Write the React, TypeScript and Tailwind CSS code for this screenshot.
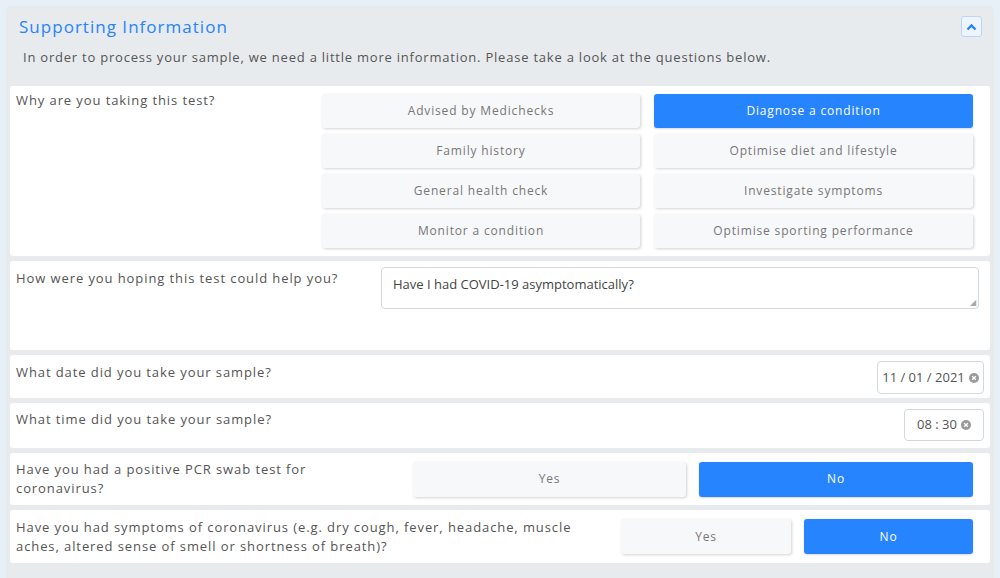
const F = { fontFamily: '"Open Sans", "Liberation Sans", sans-serif' };

const Btn = ({ label, active, className = "" }: { label: string; active?: boolean; className?: string }) => (
  <button
    className={
      "h-[34px] rounded-[3px] text-[12px] tracking-[0.07em] " +
      (active
        ? "bg-[#2684ff] text-white shadow-[0_1px_2px_rgba(0,0,0,0.15)] "
        : "bg-[#f7f8fa] text-[#777] shadow-[1px_1px_3px_rgba(0,0,0,0.18)] ") +
      className
    }
  >
    {label}
  </button>
);

const Clear = () => (
  <svg width="10" height="10" viewBox="0 0 10 10" className="ml-1">
    <circle cx="5" cy="5" r="5" fill="#9a9a9a" />
    <path d="M3.2 3.2L6.8 6.8M6.8 3.2L3.2 6.8" stroke="#fff" strokeWidth="1.3" />
  </svg>
);

const Label = ({ children, className = "" }: { children: React.ReactNode; className?: string }) => (
  <div className={"text-[13px] leading-[19px] tracking-[0.07em] text-[#555] " + className}>{children}</div>
);

export default function App() {
  const reasons = [
    ["Advised by Medichecks", "Diagnose a condition"],
    ["Family history", "Optimise diet and lifestyle"],
    ["General health check", "Investigate symptoms"],
    ["Monitor a condition", "Optimise sporting performance"],
  ];
  return (
    <div className="w-[1000px] h-[578px] bg-[#e6f0f6] pt-[6px] pl-[6px] overflow-hidden" style={F}>
      <div className="w-[988px] h-[580px] bg-[#e8ebee] rounded-[4px] px-[4px]">
        <div className="flex items-center justify-between pl-[9px] pr-[8px] pt-[8px]">
          <div className="text-[17px] tracking-[0.06em] text-[#2684ff]">Supporting Information</div>
          <div className="w-[21px] h-[21px] border border-[#b9d6fb] rounded-[3px] flex items-center justify-center bg-[#eef4fb]">
            <svg width="11" height="8" viewBox="0 0 11 8">
              <path d="M1.5 6.5L5.5 2.5L9.5 6.5" stroke="#2684ff" strokeWidth="2.4" fill="none" />
            </svg>
          </div>
        </div>
        <div className="pl-[13px] mt-[8px] text-[13px] tracking-[0.06em] text-[#555]">
          In order to process your sample, we need a little more information. Please take a look at the questions below.
        </div>
        <div className="mt-[19px] flex flex-col gap-[5px]">
          <div className="bg-white rounded-[3px] h-[170px] flex items-start pl-[6px] pt-[5px]">
            <Label className="w-[306px]">Why are you taking this test?</Label>
            <div className="grid grid-cols-[318px_319px] content-start gap-x-[14px] gap-y-[6px] pt-[3px]">
              {reasons.flat().map((r) => (
                <Btn key={r} label={r} active={r === "Diagnose a condition"} />
              ))}
            </div>
          </div>
          <div className="bg-white rounded-[3px] h-[89px] flex items-start pl-[6px] pt-[6px]">
            <Label className="w-[365px] pt-[2px]">How were you hoping this test could help you?</Label>
            <div className="relative w-[598px] h-[42px] border border-[#d3d8de] rounded-[4px] px-[11px] pt-[7px] text-[13px] text-[#444]">
              Have I had COVID-19 asymptomatically?
              <span className="absolute right-[2px] bottom-[0px] text-[8px] text-[#aaa]">◢</span>
            </div>
          </div>
          <div className="bg-white rounded-[3px] h-[43px] flex items-start justify-between pl-[6px] pr-[6px] pt-[6px]">
            <Label className="pt-[2px]">What date did you take your sample?</Label>
            <div className="w-[107px] h-[33px] border border-[#d3d8de] rounded-[4px] flex items-center justify-center text-[13px] text-[#555]">
              11 / 01 / 2021<Clear />
            </div>
          </div>
          <div className="bg-white rounded-[3px] h-[45px] flex items-start justify-between pl-[6px] pr-[6px] pt-[6px]">
            <Label className="pt-[1px]">What time did you take your sample?</Label>
            <div className="w-[80px] h-[32px] border border-[#d3d8de] rounded-[4px] flex items-center justify-center text-[13px] text-[#555]">
              08 : 30<Clear />
            </div>
          </div>
          <div className="bg-white rounded-[3px] h-[52px] flex items-center pl-[6px] pr-[17px]">
            <Label className="w-[397px] pr-[60px]">Have you had a positive PCR swab test for coronavirus?</Label>
            <div className="flex gap-[13px]">
              <Btn label="Yes" className="w-[273px] h-[35px]" />
              <Btn label="No" active className="w-[274px] h-[35px]" />
            </div>
          </div>
          <div className="bg-white rounded-[3px] h-[53px] flex items-center pl-[6px] pr-[17px]">
            <Label className="w-[605px] pr-[25px]">Have you had symptoms of coronavirus (e.g. dry cough, fever, headache, muscle aches, altered sense of smell or shortness of breath)?</Label>
            <div className="flex gap-[13px]">
              <Btn label="Yes" className="w-[170px] h-[35px]" />
              <Btn label="No" active className="w-[169px] h-[35px]" />
            </div>
          </div>
        </div>
      </div>
    </div>
  );
}
